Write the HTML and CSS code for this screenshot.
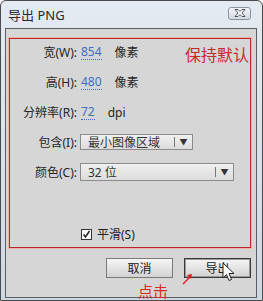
FILE: index.html
```html
<!DOCTYPE html>
<html lang="zh-CN">
<head>
    <meta charset="UTF-8">
    <title>导出 PNG</title>
    <link rel="stylesheet" href="styles.css">
</head>
<body>
<div class="window">
    <div class="titlebar">
        <span class="title">导出 PNG</span>
        <button class="close">
            <svg width="12" height="8" viewBox="0 0 12 8">
                <path d="M1 0.5h3l2 2 2-2h3l-3 3.5 3 3.5h-3l-2-2-2 2h-3l3-3.5z" fill="#fff" stroke="#4a5566" stroke-width="1"/>
            </svg>
        </button>
    </div>
    <div class="content">
        <div class="panel">
            <div class="row">
                <span class="label">宽(W):</span>
                <span class="value">854</span>
                <span class="unit">像素</span>
                <span class="note">保持默认</span>
            </div>
            <div class="row">
                <span class="label">高(H):</span>
                <span class="value">480</span>
                <span class="unit">像素</span>
            </div>
            <div class="row">
                <span class="label">分辨率(R):</span>
                <span class="value">72</span>
                <span class="unit">dpi</span>
            </div>
            <div class="row">
                <span class="label">包含(I):</span>
                <div class="select select-short">
                    <span class="select-text">最小图像区域</span>
                    <span class="select-arrow">▼</span>
                </div>
            </div>
            <div class="row">
                <span class="label">颜色(C):</span>
                <div class="select select-long">
                    <span class="select-text">32 位</span>
                    <span class="select-arrow">▼</span>
                </div>
            </div>
            <div class="row check-row">
                <span class="checkbox">
                    <svg width="11" height="11" viewBox="0 0 11 11">
                        <rect x="0.5" y="0.5" width="10" height="10" fill="#fff" stroke="#333"/>
                        <path d="M2.5 5.5l2 2.5 4-6" fill="none" stroke="#222" stroke-width="1.5"/>
                    </svg>
                </span>
                <span>平滑(S)</span>
            </div>
        </div>
        <div class="buttons">
            <button class="btn">取消</button>
            <button class="btn btn-default">导出</button>
        </div>
    </div>

    <!-- annotations drawn on top of the screenshot -->
    <span class="click-note">点击</span>
    <svg class="red-arrow" width="12" height="12" viewBox="0 0 12 12">
        <path d="M1 11l8-8" stroke="#e02020" stroke-width="1.5"/>
        <path d="M10 1l-1 5-4-4z" fill="#e02020"/>
    </svg>
    <svg class="cursor" width="13" height="20" viewBox="0 0 13 20">
        <path d="M1 1v15l3.5-3.5 2.5 6 2.5-1-2.5-6h5z" fill="#fff" stroke="#222" stroke-width="1"/>
    </svg>
</div>
</body>
</html>
```

FILE: styles.css
```css
body {
    margin: 0;
    font-family: "Noto Sans", "Noto Sans CJK SC", sans-serif;
    font-size: 12px;
    color: #222;
}

.window {
    position: relative;
    width: 263px;
    height: 301px;
    box-sizing: border-box;
    border: 1px solid #4a4a4a;
    border-radius: 6px 6px 0 0;
    background: linear-gradient(#e4eaf2, #cdd8e5);
    overflow: hidden;
}

.titlebar {
    height: 27px;
    display: flex;
    align-items: center;
    justify-content: space-between;
    padding: 0 11px 0 7px;
}

.title {
    font-size: 13px;
    color: #2a2a2a;
    margin-top: -1px;
}

.close {
    width: 23px;
    height: 13px;
    padding: 0;
    margin-top: -3px;
    border: 1px solid #8a94a2;
    border-radius: 3px;
    background: linear-gradient(#f4f6f9, #d3d9e1);
    display: flex;
    align-items: center;
    justify-content: center;
}

.content {
    margin: 0 5px 0 4px;
    height: 270px;
    box-sizing: border-box;
    border: 1px solid #5e5e5e;
    background-color: #d6d6d6;
    padding-top: 9px;
}

.panel {
    margin-left: 3px;
    width: 242px;
    height: 210px;
    box-sizing: border-box;
    border: 1px solid #b8262a;
    box-shadow: 0 0 0 1px #f0b2ae;
    padding-top: 1px;
    display: flex;
    flex-direction: column;
    gap: 6px;
}

.row {
    height: 24px;
    display: flex;
    align-items: center;
}

.label {
    width: 67px;
    text-align: right;
    color: #262626;
}

.value {
    margin-left: 4px;
    color: #3d6fc0;
    border-bottom: 1px dotted #3d6fc0;
    line-height: 14px;
}

.unit {
    margin-left: 13px;
    color: #262626;
}

.note {
    margin-left: auto;
    margin-right: 1px;
    margin-top: 4px;
    font-size: 16px;
    color: #c8282c;
}

.select {
    margin-left: 3px;
    box-sizing: border-box;
    border: 1px solid #8c8c8c;
    background: linear-gradient(#f0f0f0, #dcdcdc);
    display: flex;
    align-items: center;
}

.select-short {
    width: 113px;
    height: 16px;
}

.select-long {
    width: 154px;
    height: 18px;
}

.select-text {
    flex: 1;
    padding-left: 7px;
    color: #333;
}

.select-arrow {
    width: 17px;
    height: 10px;
    border-left: 1px solid #777;
    font-size: 8px;
    line-height: 10px;
    text-align: center;
    color: #333;
}

.check-row {
    margin-top: auto;
    margin-bottom: 1px;
    padding-left: 71px;
    gap: 5px;
}

.checkbox {
    display: flex;
}

.buttons {
    display: flex;
    justify-content: flex-end;
    gap: 11px;
    margin-top: 10px;
    padding-right: 5px;
}

.btn {
    width: 67px;
    height: 20px;
    padding: 0;
    font-family: "Noto Sans", "Noto Sans CJK SC", sans-serif;
    font-size: 12px;
    color: #222;
    border: 1px solid #7a7a7a;
    background: linear-gradient(#f6f6f6, #d2d2d2);
}

.btn-default {
    border-color: #3a3a3a;
    box-shadow: inset 0 0 0 1px #9a9a9a;
}

.click-note {
    position: absolute;
    left: 137px;
    top: 283px;
    font-size: 15px;
    line-height: 15px;
    color: #d42a22;
}

.red-arrow {
    position: absolute;
    left: 181px;
    top: 272px;
}

.cursor {
    position: absolute;
    left: 221px;
    top: 261px;
}
```
